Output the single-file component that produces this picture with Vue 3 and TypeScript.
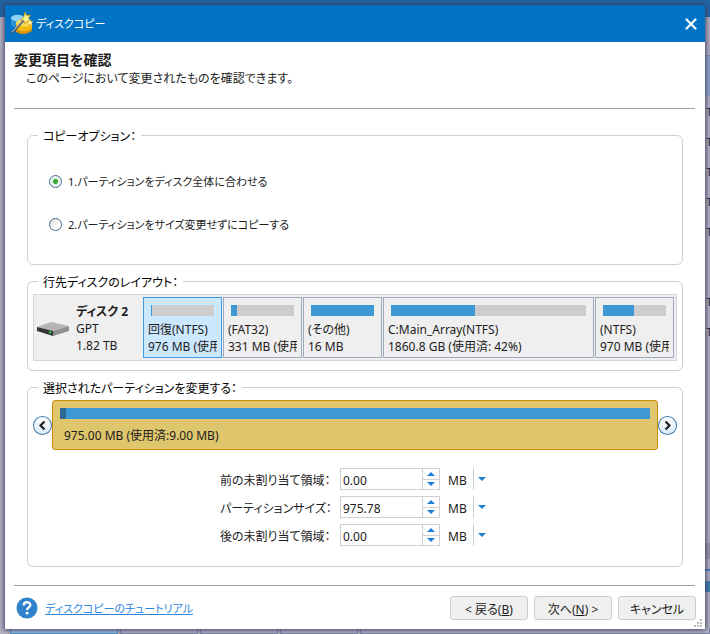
<script setup lang="ts">
import { ref } from 'vue'

interface Partition {
  name: string
  size: string
  used: number
  wide?: boolean
}

const partitions: Partition[] = [
  { name: '回復(NTFS)', size: '976 MB (使用', used: 1 },
  { name: '(FAT32)', size: '331 MB (使用', used: 10 },
  { name: '(その他)', size: '16 MB', used: 100 },
  { name: 'C:Main_Array(NTFS)', size: '1860.8 GB (使用済: 42%)', used: 43, wide: true },
  { name: '(NTFS)', size: '970 MB (使用', used: 49 },
]

const selected = ref(0)
const copyMode = ref('fit')

const fields = ref([
  { id: 'before', label: '前の未割り当て領域：', value: '0.00', unit: 'MB' },
  { id: 'size', label: 'パーティションサイズ：', value: '975.78', unit: 'MB' },
  { id: 'after', label: '後の未割り当て領域：', value: '0.00', unit: 'MB' },
])

function step(index: number, delta: number) {
  const field = fields.value[index]
  field.value = Math.max(0, parseFloat(field.value) + delta).toFixed(2)
}
</script>

<template>
  <div class="page">
    <div class="backdrop" aria-hidden="true">
      <div class="back-title"></div>
      <div class="back-main">
        <div class="back-list">
          <div class="back-tools"></div>
          <div class="back-tabs"></div>
          <div class="back-head"></div>
          <div v-for="n in 5" :key="n" class="back-row">T</div>
          <div class="back-space"></div>
          <div v-for="n in 2" :key="'b' + n" class="back-row">T</div>
          <div class="back-empty"></div>
          <div class="back-scroll"></div>
          <div class="back-line"></div>
          <div class="back-bar"></div>
        </div>
      </div>
      <div class="back-cells">
        <span class="picked"></span><span></span><span></span><span></span><span class="rest"></span>
      </div>
    </div>

    <main class="dialog">
      <header class="titlebar">
        <svg class="logo" viewBox="0 0 24 24" width="24" height="24">
          <path d="M1 7c0-4 9-5 13-2v9c-3 3-13 2-13-2z" fill="#2b93d6" />
          <ellipse cx="7.500" cy="6" rx="6.500" ry="3.200" fill="#8fd2f3" />
          <path d="M6 11c4-3 12-4 16-1v8c-2 4-14 5-16 1z" fill="#f2b90f" />
          <path d="M6 17c4 3 12 3 16-1v2c-3 5-14 5-16 1z" fill="#d98e08" />
          <ellipse cx="14" cy="11" rx="8" ry="3.400" fill="#fbe05a" />
          <path d="M15 0l1.600 3.600 3.800-.5-2 3.200 2.500 2.900-3.800-.2-2 3.300-1.100-3.700-3.700-1 3.300-2z" fill="#fff08a" stroke="#c89a18" stroke-width=".8" />
          <path d="M20 7.500l.9 2 2.100.2-1.600 1.500.5 2.100-1.900-1.100-1.900 1.100.5-2.100-1.600-1.500 2.200-.2z" fill="#fff7b0" stroke="#d0a020" stroke-width=".5" />
          <path d="M2 21L13.500 8.500" stroke="#4c565f" stroke-width="2.400" />
          <path d="M2 20L13 8.500" stroke="#d4dade" stroke-width=".9" />
        </svg>
        <h1>ディスクコピー</h1>
        <button class="close" type="button" aria-label="閉じる">
          <svg viewBox="0 0 12 12" width="12" height="12"><path d="M1.500 1.500l9 9M10.500 1.500l-9 9" stroke="#fff" stroke-width="2.200" stroke-linecap="round" /></svg>
        </button>
      </header>

      <div class="intro">
        <h2>変更項目を確認</h2>
        <p>このページにおいて変更されたものを確認できます。</p>
      </div>

      <div class="groups">
        <fieldset class="options">
          <legend>コピーオプション：</legend>
          <label><input v-model="copyMode" type="radio" name="mode" value="fit" /><span>1.パーティションをディスク全体に合わせる</span></label>
          <label><input v-model="copyMode" type="radio" name="mode" value="keep" /><span>2.パーティションをサイズ変更せずにコピーする</span></label>
        </fieldset>

        <fieldset class="layout">
          <legend>行先ディスクのレイアウト：</legend>
          <div class="disk">
            <div class="disk-info">
              <svg viewBox="0 0 32 14" width="32" height="14">
                <path d="M0 5L14 0l18 4-16 5z" fill="#b5b5b5" />
                <path d="M0 5l16 4v5L0 9z" fill="#343434" />
                <path d="M16 9l16-5v5l-16 5z" fill="#8f8f8f" />
                <circle cx="13" cy="10.500" r="1.200" fill="#2fd04a" />
              </svg>
              <div class="lines">
                <strong>ディスク 2</strong>
                <span>GPT</span>
                <span>1.82 TB</span>
              </div>
            </div>
            <button
              v-for="(p, i) in partitions"
              :key="p.name"
              type="button"
              class="part"
              :class="{ wide: p.wide, selected: selected === i }"
              @click="selected = i"
            >
              <span class="meter"><span class="fill" :style="{ width: p.used + '%' }"></span></span>
              <span class="line">{{ p.name }}</span>
              <span class="line">{{ p.size }}</span>
            </button>
          </div>
        </fieldset>

        <fieldset class="resize">
          <legend>選択されたパーティションを変更する：</legend>
          <div class="slider">
            <button class="round" type="button" aria-label="左へ">
              <svg viewBox="0 0 19 19" width="19" height="19"><path d="M11.500 5.500l-4 4 4 4" fill="none" stroke="#222" stroke-width="2.200" /></svg>
            </button>
            <div class="volume">
              <div class="track"><div class="used" :style="{ width: '1%' }"></div></div>
              <div class="caption">975.00 MB (使用済:9.00 MB)</div>
            </div>
            <button class="round" type="button" aria-label="右へ">
              <svg viewBox="0 0 19 19" width="19" height="19"><path d="M7.500 5.500l4 4-4 4" fill="none" stroke="#222" stroke-width="2.200" /></svg>
            </button>
          </div>
          <div class="form">
            <template v-for="(f, i) in fields" :key="f.id">
              <label :for="f.id">{{ f.label }}</label>
              <div class="spin">
                <input :id="f.id" v-model="f.value" type="text" />
                <div class="steps">
                  <button type="button" aria-label="増やす" @click="step(i, 1)"><svg viewBox="0 0 8 4" width="8" height="4"><path d="M0 4l4-4 4 4z" fill="#1f7fd0" /></svg></button>
                  <button type="button" aria-label="減らす" @click="step(i, -1)"><svg viewBox="0 0 8 4" width="8" height="4"><path d="M0 0l4 4 4-4z" fill="#1f7fd0" /></svg></button>
                </div>
              </div>
              <div class="unit">
                <select v-model="f.unit" aria-label="単位"><option>MB</option><option>GB</option></select>
                <svg viewBox="0 0 8 4" width="8" height="4"><path d="M0 0l4 4 4-4z" fill="#1f7fd0" /></svg>
              </div>
            </template>
          </div>
        </fieldset>
      </div>

      <footer>
        <svg class="help" viewBox="0 0 22 22" width="22" height="22">
          <circle cx="11" cy="11" r="10.500" fill="#2f82cb" />
          <path d="M7.700 8.600c0-4.400 6.600-4.300 6.600-.6 0 2.400-3.200 2.500-3.200 5" fill="none" stroke="#fff" stroke-width="2.300" />
          <circle cx="11.100" cy="16" r="1.500" fill="#fff" />
        </svg>
        <a href="#">ディスクコピーのチュートリアル</a>
        <div class="actions">
          <button type="button">&lt; 戻る(<u>B</u>)</button>
          <button type="button">次へ(<u>N</u>) &gt;</button>
          <button type="button">キャンセル</button>
        </div>
        <svg class="grip" viewBox="0 0 8 8" width="8" height="8">
          <path d="M6 0h2v2H6zM3 3h2v2H3zM6 3h2v2H6zM0 6h2v2H0zM3 6h2v2H3zM6 6h2v2H6z" fill="#bcbcbc" />
        </svg>
      </footer>
    </main>
  </div>
</template>

<style>
body {
  margin: 0;
}
</style>

<style scoped>
* {
  box-sizing: border-box;
}
.page {
  position: relative;
  display: flex;
  min-height: 100vh;
  padding: 5px;
  font: 12px/17px "Noto Sans", "Noto Sans CJK JP", sans-serif;
  font-feature-settings: "palt";
  color: #1c1c1c;
}
button,
input,
select {
  margin: 0;
  padding: 0;
  font: inherit;
  font-feature-settings: inherit;
  color: inherit;
}
.backdrop {
  position: absolute;
  inset: 0;
  display: flex;
  flex-direction: column;
  overflow: hidden;
  background: #b4b3c0;
}
.back-title {
  flex: none;
  height: 17px;
  background: #1f66a4;
}
.back-main {
  flex: 1;
  display: flex;
  justify-content: flex-end;
  min-height: 0;
}
.back-list {
  display: flex;
  flex-direction: column;
  width: 5px;
}
.back-tools {
  height: 38px;
}
.back-tabs {
  height: 41px;
  background: #91a7c8;
  border-top: 1px solid #8790a8;
}
.back-head {
  height: 12px;
}
.back-row {
  height: 30px;
  padding: 0 0 0 1px;
  font: 11px/9px "Liberation Sans", sans-serif;
  color: #222238;
}
.back-space {
  height: 40px;
}
.back-empty {
  height: 185px;
}
.back-scroll {
  height: 16px;
  background: #9a9aa8;
}
.back-line {
  height: 22px;
  border-bottom: 10px solid #b4b3c0;
  box-shadow: inset 0 -2px #3d83bd;
}
.back-bar {
  height: 11px;
  background: #3d7fb2;
}
.back-cells {
  flex: none;
  display: flex;
  gap: 2px;
  height: 6px;
  padding-left: 10px;
}
.back-cells span {
  width: 78px;
  border: 1px solid #7d84a3;
  border-width: 0 1px 1px;
}
.back-cells .picked {
  width: 108px;
  border-color: #4d91cc;
  background: #9fbad8;
}
.back-cells .rest {
  flex: 1;
}
.dialog {
  position: relative;
  flex: 1;
  display: flex;
  flex-direction: column;
  min-width: 0;
  background: #fff;
  box-shadow: 0 0 5px 1px #3c3c66;
}
.titlebar {
  display: flex;
  align-items: center;
  height: 37px;
  padding: 0 8px 0 5px;
  background: #0173c4;
  color: #fff;
}
.titlebar h1 {
  flex: 1;
  margin: 0 0 0 2px;
  font-size: 11px;
  font-weight: 400;
}
.close {
  display: flex;
  border: 0;
  background: none;
}
.intro {
  margin: 0 10px 0 9px;
  padding: 9px 0 20px;
  border-bottom: 1px solid #a0a0a0;
  line-height: 18px;
}
.intro h2 {
  margin: 0;
  font-size: 14px;
  font-weight: 700;
}
.intro p {
  margin: 1px 0 0 12px;
}
.groups {
  flex: 1;
  display: flex;
  flex-direction: column;
  gap: 7px;
  padding: 17px 22px 18px;
}
fieldset {
  min-width: 0;
  margin: 0;
  padding: 3px 5px 9px;
  border: 1px solid #cfcfcf;
  border-radius: 6px;
}
legend {
  margin-left: 5px;
  padding: 2px 5px 0;
  color: #000;
}
.options {
  padding: 26px 21px 30px;
}
.options legend {
  margin-left: -11px;
}
.options label {
  display: flex;
  align-items: center;
  gap: 6px;
  width: max-content;
  height: 20px;
  font-size: 11px;
}
.options label + label {
  margin-top: 23px;
}
.options input {
  appearance: none;
  width: 13px;
  height: 13px;
  border: 1px solid #3c6c98;
  border-radius: 50%;
  background: linear-gradient(135deg, #dcdcd8, #fff 70%);
}
.options input:checked {
  background: radial-gradient(circle, #2faa2f 0 2px, #e8f0e8 3px, #f6f8f6);
}
.disk {
  display: flex;
  gap: 1px;
  padding: 2px;
  border: 1px solid #d0d7e0;
  background: #efefef;
}
.disk-info {
  display: flex;
  align-items: center;
  gap: 7px;
  flex: none;
  width: 106px;
  padding: 2px 0 0 1px;
}
.lines {
  display: flex;
  flex-direction: column;
}
.lines strong {
  font-size: 12px;
}
.part {
  flex: none;
  width: 79px;
  height: 61px;
  padding: 7px 4px 2px;
  overflow: hidden;
  border: 1px solid #a0a9be;
  background: #efefef;
  text-align: left;
}
.part.wide {
  flex: 1;
  min-width: 0;
}
.part.selected {
  border-color: #3d9bea;
  background: #cce8ff;
}
.meter {
  display: block;
  height: 11px;
  margin: 0 3px 5px;
  background: #cdcdcd;
}
.fill {
  display: block;
  height: 100%;
  background: #3d98d3;
}
.line {
  display: block;
  overflow: hidden;
  white-space: nowrap;
}
.slider {
  display: flex;
  align-items: center;
}
.round {
  flex: none;
  display: flex;
  width: 19px;
  height: 19px;
  border: 0;
  border-radius: 50%;
  background: linear-gradient(#fdfeff, #d8ebf8);
  box-shadow: inset 0 0 0 1px #3f7aa8;
}
.volume {
  flex: 1;
  height: 50px;
  padding: 7px;
  border: 1px solid #cc8a0a;
  border-radius: 3px;
  background: #dfc66c;
}
.track {
  height: 11px;
  background: #3d98d3;
}
.used {
  height: 100%;
  background: #2b6a95;
}
.caption {
  margin: 8px 4px 0;
}
.form {
  display: grid;
  grid-template-columns: 112px 100px 42px;
  align-items: center;
  justify-content: center;
  gap: 6px 8px;
  padding: 18px 0 11px;
}
.form label {
  padding-top: 2px;
  white-space: nowrap;
}
.spin {
  display: flex;
  height: 22px;
  border: 1px solid #cfcfcf;
}
.spin input {
  flex: 1;
  min-width: 0;
  padding: 2px 2px 0;
  border: 0;
  background: #fff;
}
.steps {
  display: flex;
  flex-direction: column;
  width: 17px;
  border-left: 1px solid #cfcfcf;
}
.steps button {
  flex: 1;
  display: flex;
  align-items: center;
  justify-content: center;
  border: 0;
  background: none;
}
.steps button + button {
  border-top: 1px solid #cfcfcf;
}
.unit {
  display: grid;
  align-items: center;
}
.unit select {
  grid-area: 1 / 1;
  appearance: none;
  width: 26px;
  height: 22px;
  padding-top: 2px;
  border: 0;
  border-right: 1px solid #cfcfcf;
  border-radius: 0;
  background: none;
}
.unit svg {
  grid-area: 1 / 1;
  justify-self: end;
  margin-right: 4px;
  pointer-events: none;
}
footer {
  display: flex;
  align-items: center;
  margin: 0 10px 0 9px;
  padding: 10px 0 9px 2px;
  border-top: 1px solid #a0a0a0;
}
footer a {
  margin-left: 7px;
  font-size: 11px;
  color: #2d86de;
}
.actions {
  display: flex;
  gap: 6px;
  margin: 0 -1px 0 auto;
}
.actions button {
  width: 78px;
  height: 24px;
  padding-top: 2px;
  border: 1px solid #cdcdcd;
  border-radius: 3px;
  background: #efefef;
  white-space: nowrap;
}
.grip {
  position: absolute;
  right: 3px;
  bottom: 2px;
}
</style>
